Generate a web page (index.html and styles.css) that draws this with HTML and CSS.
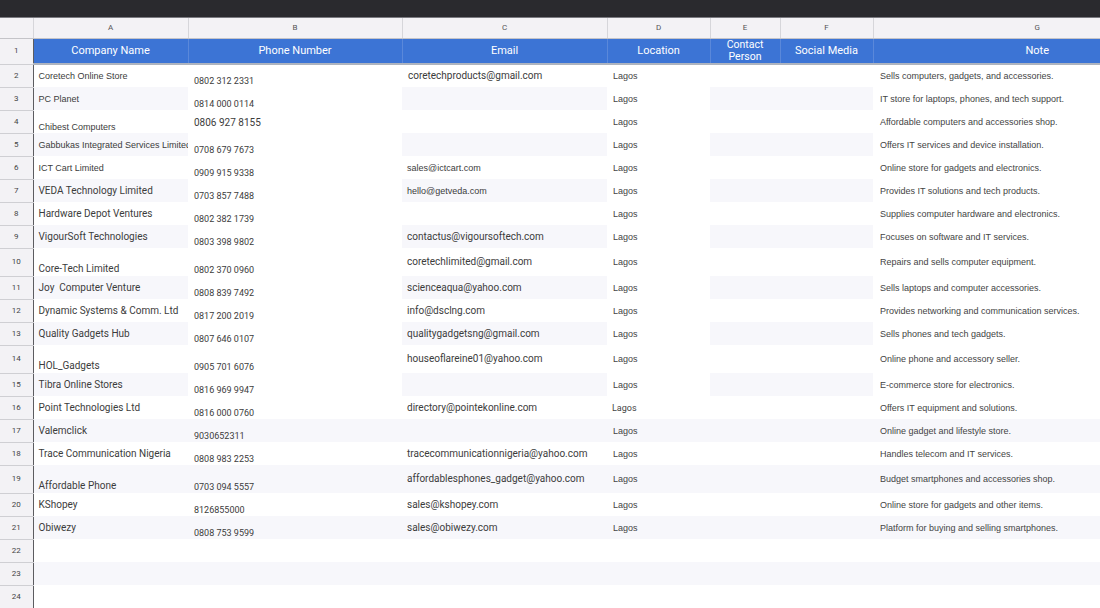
FILE: index.html
```html
<!DOCTYPE html>
<html lang="en">
<head>
    <meta charset="UTF-8">
    <title>Lagos Tech Stores</title>
    <link rel="stylesheet" href="styles.css">
</head>
<body>
    <div class="topbar"></div>

    <table class="sheet">
        <colgroup>
            <col class="w-rh">
            <col class="w-a">
            <col class="w-b">
            <col class="w-c">
            <col class="w-d">
            <col class="w-e">
            <col class="w-f">
            <col class="w-g">
        </colgroup>
        <thead>
            <tr class="letters">
                <th class="corner"></th>
                <th>A</th><th>B</th><th>C</th><th>D</th><th>E</th><th>F</th><th>G</th>
            </tr>
        </thead>
        <tbody>
            <tr class="head">
                <td class="rh">1</td>
                <td>Company Name</td>
                <td>Phone Number</td>
                <td>Email</td>
                <td>Location</td>
                <td class="two">Contact<br>Person</td>
                <td>Social Media</td>
                <td>Note</td>
            </tr>
            <tr>
                <td class="rh">2</td>
                <td class="sm">Coretech Online Store</td>
                <td class="ph bot">0802 312 2331</td>
                <td class="md">coretechproducts@gmail.com</td>
                <td class="loc">Lagos</td>
                <td></td><td></td>
                <td class="note">Sells computers, gadgets, and accessories.</td>
            </tr>
            <tr class="band">
                <td class="rh">3</td>
                <td class="sm">PC Planet</td>
                <td class="ph bot">0814 000 0114</td>
                <td></td>
                <td class="loc">Lagos</td>
                <td></td><td></td>
                <td class="note">IT store for laptops, phones, and tech support.</td>
            </tr>
            <tr>
                <td class="rh">4</td>
                <td class="sm bot">Chibest Computers</td>
                <td class="ph big top">0806 927 8155</td>
                <td></td>
                <td class="loc">Lagos</td>
                <td></td><td></td>
                <td class="note">Affordable computers and accessories shop.</td>
            </tr>
            <tr class="band">
                <td class="rh">5</td>
                <td class="sm">Gabbukas Integrated Services Limited</td>
                <td class="ph bot">0708 679 7673</td>
                <td></td>
                <td class="loc">Lagos</td>
                <td></td><td></td>
                <td class="note">Offers IT services and device installation.</td>
            </tr>
            <tr>
                <td class="rh">6</td>
                <td class="sm">ICT Cart Limited</td>
                <td class="ph bot">0909 915 9338</td>
                <td class="sm">sales@ictcart.com</td>
                <td class="loc">Lagos</td>
                <td></td><td></td>
                <td class="note">Online store for gadgets and electronics.</td>
            </tr>
            <tr class="band">
                <td class="rh">7</td>
                <td class="lg">VEDA Technology Limited</td>
                <td class="ph bot">0703 857 7488</td>
                <td class="sm">hello@getveda.com</td>
                <td class="loc">Lagos</td>
                <td></td><td></td>
                <td class="note">Provides IT solutions and tech products.</td>
            </tr>
            <tr>
                <td class="rh">8</td>
                <td class="lg">Hardware Depot Ventures</td>
                <td class="ph bot">0802 382 1739</td>
                <td></td>
                <td class="loc">Lagos</td>
                <td></td><td></td>
                <td class="note">Supplies computer hardware and electronics.</td>
            </tr>
            <tr class="band">
                <td class="rh">9</td>
                <td class="lg">VigourSoft Technologies</td>
                <td class="ph bot">0803 398 9802</td>
                <td class="lg">contactus@vigoursoftech.com</td>
                <td class="loc">Lagos</td>
                <td></td><td></td>
                <td class="note">Focuses on software and IT services.</td>
            </tr>
            <tr class="tall">
                <td class="rh">10</td>
                <td class="lg bot">Core-Tech Limited</td>
                <td class="ph bot">0802 370 0960</td>
                <td class="lg">coretechlimited@gmail.com</td>
                <td class="loc">Lagos</td>
                <td></td><td></td>
                <td class="note">Repairs and sells computer equipment.</td>
            </tr>
            <tr class="band">
                <td class="rh">11</td>
                <td class="lg">Joy&nbsp; Computer Venture</td>
                <td class="ph bot">0808 839 7492</td>
                <td class="lg">scienceaqua@yahoo.com</td>
                <td class="loc">Lagos</td>
                <td></td><td></td>
                <td class="note">Sells laptops and computer accessories.</td>
            </tr>
            <tr>
                <td class="rh">12</td>
                <td class="lg">Dynamic Systems &amp; Comm. Ltd</td>
                <td class="ph bot">0817 200 2019</td>
                <td class="lg">info@dsclng.com</td>
                <td class="loc">Lagos</td>
                <td></td><td></td>
                <td class="note">Provides networking and communication services.</td>
            </tr>
            <tr class="band">
                <td class="rh">13</td>
                <td class="lg">Quality Gadgets Hub</td>
                <td class="ph bot">0807 646 0107</td>
                <td class="lg">qualitygadgetsng@gmail.com</td>
                <td class="loc">Lagos</td>
                <td></td><td></td>
                <td class="note">Sells phones and tech gadgets.</td>
            </tr>
            <tr class="tall">
                <td class="rh">14</td>
                <td class="lg bot">HOL_Gadgets</td>
                <td class="ph bot">0905 701 6076</td>
                <td class="lg">houseoflareine01@yahoo.com</td>
                <td class="loc">Lagos</td>
                <td></td><td></td>
                <td class="note">Online phone and accessory seller.</td>
            </tr>
            <tr class="band">
                <td class="rh">15</td>
                <td class="lg">Tibra Online Stores</td>
                <td class="ph bot">0816 969 9947</td>
                <td></td>
                <td class="loc">Lagos</td>
                <td></td><td></td>
                <td class="note">E-commerce store for electronics.</td>
            </tr>
            <tr>
                <td class="rh">16</td>
                <td class="lg">Point Technologies Ltd</td>
                <td class="ph bot">0816 000 0760</td>
                <td class="lg">directory@pointekonline.com</td>
                <td class="loc lg">Lagos</td>
                <td></td><td></td>
                <td class="note">Offers IT equipment and solutions.</td>
            </tr>
            <tr class="band full">
                <td class="rh">17</td>
                <td class="lg">Valemclick</td>
                <td class="ph bot">9030652311</td>
                <td></td>
                <td class="loc">Lagos</td>
                <td></td><td></td>
                <td class="note">Online gadget and lifestyle store.</td>
            </tr>
            <tr>
                <td class="rh">18</td>
                <td class="lg">Trace Communication Nigeria</td>
                <td class="ph bot">0808 983 2253</td>
                <td class="lg">tracecommunicationnigeria@yahoo.com</td>
                <td class="loc">Lagos</td>
                <td></td><td></td>
                <td class="note">Handles telecom and IT services.</td>
            </tr>
            <tr class="tall band full">
                <td class="rh">19</td>
                <td class="lg bot">Affordable Phone</td>
                <td class="ph bot">0703 094 5557</td>
                <td class="lg">affordablesphones_gadget@yahoo.com</td>
                <td class="loc">Lagos</td>
                <td></td><td></td>
                <td class="note">Budget smartphones and accessories shop.</td>
            </tr>
            <tr>
                <td class="rh">20</td>
                <td class="lg">KShopey</td>
                <td class="ph bot">8126855000</td>
                <td class="lg">sales@kshopey.com</td>
                <td class="loc">Lagos</td>
                <td></td><td></td>
                <td class="note">Online store for gadgets and other items.</td>
            </tr>
            <tr class="band full">
                <td class="rh">21</td>
                <td class="lg">Obiwezy</td>
                <td class="ph bot">0808 753 9599</td>
                <td class="lg">sales@obiwezy.com</td>
                <td class="loc">Lagos</td>
                <td></td><td></td>
                <td class="note">Platform for buying and selling smartphones.</td>
            </tr>
            <tr>
                <td class="rh">22</td>
                <td></td><td></td><td></td><td></td><td></td><td></td><td></td>
            </tr>
            <tr class="band full">
                <td class="rh">23</td>
                <td></td><td></td><td></td><td></td><td></td><td></td><td></td>
            </tr>
            <tr>
                <td class="rh">24</td>
                <td></td><td></td><td></td><td></td><td></td><td></td><td></td>
            </tr>
        </tbody>
    </table>
</body>
</html>
```

FILE: styles.css
```css
body {
    margin: 0;
    padding: 0;
    width: 1100px;
    height: 608px;
    overflow: hidden;
    background-color: #fff;
    font-family: "Liberation Sans", Arial, sans-serif;
    color: #3a3a3a;
}

.topbar {
    height: 17px;
    background-color: #2a2a2e;
    border-bottom: 1px solid #7a7a80;
}

/* column G runs past the right edge of the window */
.sheet {
    width: 1201px;
    table-layout: fixed;
    border-collapse: collapse;
}

.w-rh { width: 33px; }
.w-a { width: 155px; }
.w-b { width: 214px; }
.w-c { width: 205px; }
.w-d { width: 103px; }
.w-e { width: 70px; }
.w-f { width: 93px; }
.w-g { width: 328px; }

/* column letters */
.letters th {
    box-sizing: border-box;
    height: 20px;
    padding: 0;
    line-height: 10px;
    background-color: #f3f2f5;
    border-left: 1px solid #d6d6da;
    border-bottom: 1px solid #c4c4c8;
    font-family: Roboto, "Liberation Sans", sans-serif;
    font-size: 8px;
    font-weight: normal;
    color: #555;
    text-align: center;
}

.letters .corner {
    border-left: none;
}

td {
    box-sizing: border-box;
    padding: 0 6px;
    height: 23px;
    line-height: 12px;
    white-space: nowrap;
    overflow: hidden;
    vertical-align: middle;
    font-size: 9px;
}

/* row numbers */
td.rh {
    padding: 0;
    background-color: #f3f2f5;
    border-right: 1px solid #5c5c60;
    border-bottom: 1px solid #cfcfd3;
    text-align: center;
    font-family: Roboto, "Liberation Sans", sans-serif;
    font-size: 8px;
    color: #444;
}

/* header row */
.head td {
    height: 26px;
    background-color: #3c74d5;
    border-bottom: 2px solid #aeb4bf;
    border-left: 1px solid #5a88da;
    color: #fff;
    text-align: center;
    font-family: Roboto, "Liberation Sans", sans-serif;
    font-size: 11px;
}

.head td.rh {
    background-color: #f3f2f5;
    border-left: none;
    border-bottom: 1px solid #cfcfd3;
    color: #444;
    font-size: 8px;
}

.head td.two {
    padding: 0;
    line-height: 12px;
    font-size: 10.5px;
}

.tall td {
    height: 28px;
}

/* banding: columns A, C, E, F on odd rows; full row near the bottom */
.band td:nth-child(2),
.band td:nth-child(4),
.band td:nth-child(6),
.band td:nth-child(7),
.full td {
    background-color: #f7f7fb;
}

.band td.rh {
    background-color: #f3f2f5;
}

.sm {
    font-family: "Liberation Sans", Arial, sans-serif;
    font-size: 9px;
    padding-left: 5px;
    color: #3c3c3c;
}

.lg {
    font-family: Roboto, "Liberation Sans", sans-serif;
    font-size: 10px;
    padding-left: 5px;
    color: #3c3c3c;
}

.md {
    font-family: Roboto, "Liberation Sans", sans-serif;
    font-size: 10px;
}

.ph {
    font-family: Roboto, "Liberation Sans", sans-serif;
    font-size: 9px;
    color: #3c3c3c;
}

.ph.big {
    font-size: 10px;
}

.loc {
    font-size: 9px;
    color: #444;
}

.note {
    padding-left: 7px;
    font-size: 9px;
    color: #444;
}

.bot {
    vertical-align: bottom;
    padding-bottom: 0;
    line-height: 11px;
}

.lg.bot {
    padding-bottom: 2px;
}

.top {
    vertical-align: top;
    padding-top: 7px;
}
```
